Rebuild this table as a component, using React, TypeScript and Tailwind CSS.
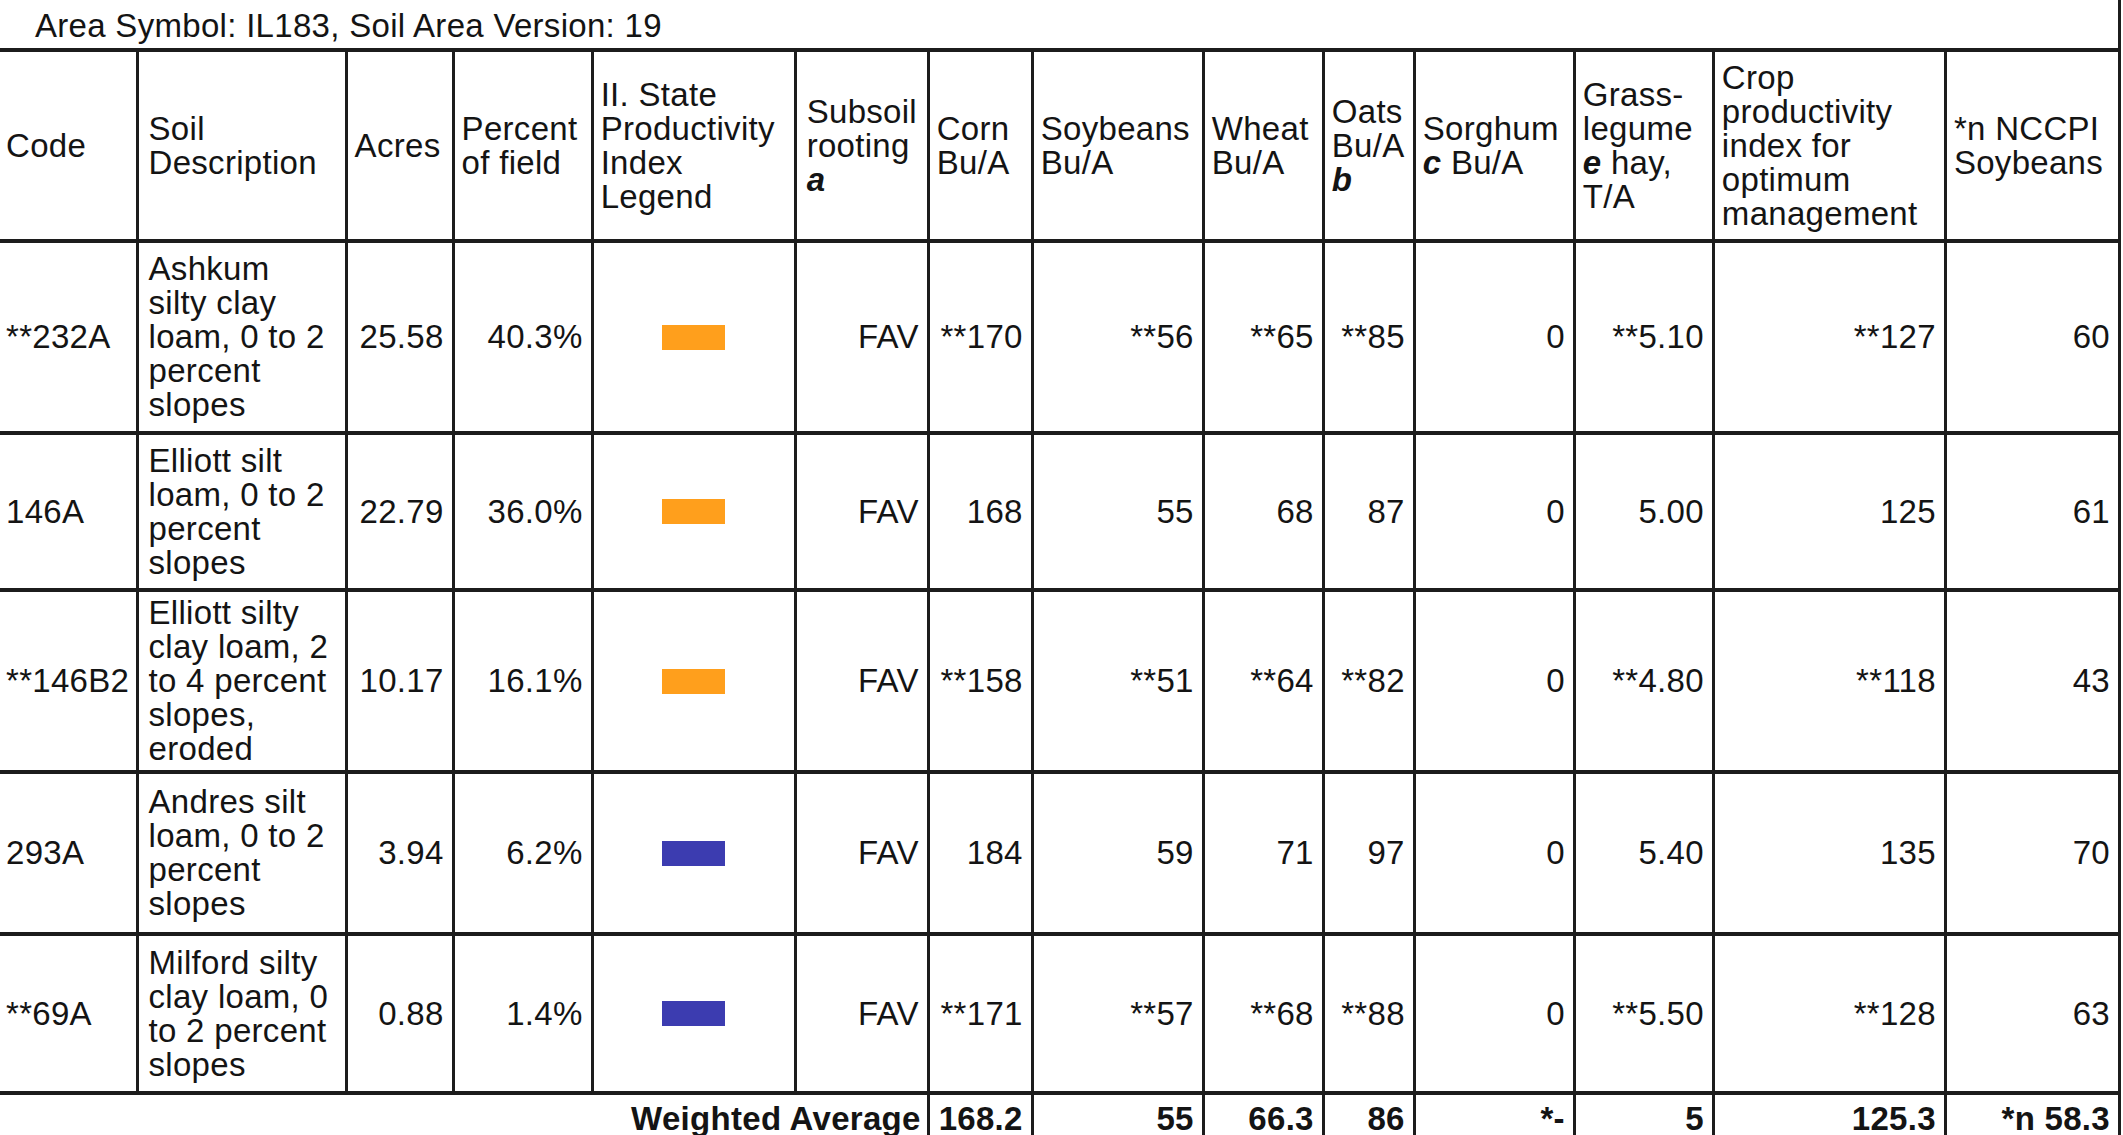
import React from "react"

interface SoilRow {
  code: string
  desc: string
  acres: string
  pct: string
  legend: "orange" | "blue"
  sub: string
  corn: string
  soy: string
  wheat: string
  oats: string
  sorghum: string
  grass: string
  crop: string
  nccpi: string
  height: string
}

const rows: SoilRow[] = [
  {
    code: "**232A",
    desc: "Ashkum silty clay loam, 0 to 2 percent slopes",
    acres: "25.58",
    pct: "40.3%",
    legend: "orange",
    sub: "FAV",
    corn: "**170",
    soy: "**56",
    wheat: "**65",
    oats: "**85",
    sorghum: "0",
    grass: "**5.10",
    crop: "**127",
    nccpi: "60",
    height: "h-[192px]",
  },
  {
    code: "146A",
    desc: "Elliott silt loam, 0 to 2 percent slopes",
    acres: "22.79",
    pct: "36.0%",
    legend: "orange",
    sub: "FAV",
    corn: "168",
    soy: "55",
    wheat: "68",
    oats: "87",
    sorghum: "0",
    grass: "5.00",
    crop: "125",
    nccpi: "61",
    height: "h-[157px]",
  },
  {
    code: "**146B2",
    desc: "Elliott silty clay loam, 2 to 4 percent slopes, eroded",
    acres: "10.17",
    pct: "16.1%",
    legend: "orange",
    sub: "FAV",
    corn: "**158",
    soy: "**51",
    wheat: "**64",
    oats: "**82",
    sorghum: "0",
    grass: "**4.80",
    crop: "**118",
    nccpi: "43",
    height: "h-[182px]",
  },
  {
    code: "293A",
    desc: "Andres silt loam, 0 to 2 percent slopes",
    acres: "3.94",
    pct: "6.2%",
    legend: "blue",
    sub: "FAV",
    corn: "184",
    soy: "59",
    wheat: "71",
    oats: "97",
    sorghum: "0",
    grass: "5.40",
    crop: "135",
    nccpi: "70",
    height: "h-[162px]",
  },
  {
    code: "**69A",
    desc: "Milford silty clay loam, 0 to 2 percent slopes",
    acres: "0.88",
    pct: "1.4%",
    legend: "blue",
    sub: "FAV",
    corn: "**171",
    soy: "**57",
    wheat: "**68",
    oats: "**88",
    sorghum: "0",
    grass: "**5.50",
    crop: "**128",
    nccpi: "63",
    height: "h-[159px]",
  },
]

const colWidths = [137, 209, 107, 139, 203, 133, 104, 171, 120, 91, 160, 139, 232, 174]

// header cells: left aligned text, thin vertical rules
const th = "border-x-[3px] border-[#1c1c1c] pl-[7px] pr-[4px] text-left align-middle font-normal"
const thFirst = "border-r-[3px] border-[#1c1c1c] pl-[6px] pr-[4px] text-left align-middle font-normal"
const thDesc = "border-x-[3px] border-[#1c1c1c] pl-[10px] pr-[4px] text-left align-middle font-normal"

// body cells: numbers sit on the right
const td = "border-x-[3px] border-[#1c1c1c] pl-[6px] pr-[8px] text-right align-middle"
const tdFirst = "border-r-[3px] border-[#1c1c1c] pl-[6px] pr-[2px] text-left align-middle"
const tdDesc = "border-x-[3px] border-[#1c1c1c] pl-[10px] pr-[11px] text-left align-middle"
const tdLegend = "border-x-[3px] border-[#1c1c1c] px-[6px] text-center align-middle"

const avg = "border-x-[3px] border-[#1c1c1c] pl-[6px] pr-[8px] pt-[7px] pb-[7px] text-right align-top font-bold"
const avgLabel = "border-r-[3px] border-[#1c1c1c] pl-[6px] pr-[6px] pt-[7px] pb-[7px] text-right align-top font-bold"

export default function App() {
  return (
    <div className="w-[2123px] h-[1135px] overflow-hidden bg-white text-[#141414] font-['Liberation_Sans',Arial,sans-serif] text-[33px] leading-[34px] tracking-[0.3px]">
      <div className="w-[2121px] h-[48px] border-r-[3px] border-[#1c1c1c] pl-[35px] pt-[9px]">
        Area Symbol: IL183, Soil Area Version: 19
      </div>
      <table className="table-fixed border-collapse w-[2121px]">
        <colgroup>
          {colWidths.map((w, i) => (
            <col key={i} style={{ width: w }} />
          ))}
        </colgroup>
        <thead>
          <tr className="h-[191px] border-y-[4px] border-[#1c1c1c]">
            <th className={thFirst}>Code</th>
            <th className={thDesc}>Soil Description</th>
            <th className={th}>Acres</th>
            <th className={th}>Percent of field</th>
            <th className={th}>II. State Productivity Index Legend</th>
            <th className={thDesc}>
              Subsoil rooting <b className="italic">a</b>
            </th>
            <th className={th}>Corn Bu/A</th>
            <th className={th}>Soybeans Bu/A</th>
            <th className={th}>Wheat Bu/A</th>
            <th className={th}>
              Oats Bu/A <b className="italic">b</b>
            </th>
            <th className={th}>
              Sorghum <b className="italic">c</b> Bu/A
            </th>
            <th className={th}>
              Grass-legume <b className="italic">e</b> hay, T/A
            </th>
            <th className={th}>Crop productivity index for optimum management</th>
            <th className={th}>*n NCCPI Soybeans</th>
          </tr>
        </thead>
        <tbody>
          {rows.map((r) => (
            <tr key={r.code} className={r.height + " border-b-[4px] border-[#1c1c1c]"}>
              <td className={tdFirst}>{r.code}</td>
              <td className={tdDesc}>{r.desc}</td>
              <td className={td}>{r.acres}</td>
              <td className={td}>{r.pct}</td>
              <td className={tdLegend}>
                <div
                  className={
                    r.legend === "orange"
                      ? "mx-auto w-[63px] h-[25px] bg-[#ff9f1c]"
                      : "mx-auto w-[63px] h-[25px] bg-[#3c3cb0]"
                  }
                />
              </td>
              <td className={td}>{r.sub}</td>
              <td className={td}>{r.corn}</td>
              <td className={td}>{r.soy}</td>
              <td className={td}>{r.wheat}</td>
              <td className={td}>{r.oats}</td>
              <td className={td}>{r.sorghum}</td>
              <td className={td}>{r.grass}</td>
              <td className={td}>{r.crop}</td>
              <td className={td}>{r.nccpi}</td>
            </tr>
          ))}
          <tr>
            <td colSpan={6} className={avgLabel}>
              Weighted Average
            </td>
            <td className={avg}>168.2</td>
            <td className={avg}>55</td>
            <td className={avg}>66.3</td>
            <td className={avg}>86</td>
            <td className={avg}>*-</td>
            <td className={avg}>5</td>
            <td className={avg}>125.3</td>
            <td className={avg}>*n 58.3</td>
          </tr>
        </tbody>
      </table>
    </div>
  )
}
